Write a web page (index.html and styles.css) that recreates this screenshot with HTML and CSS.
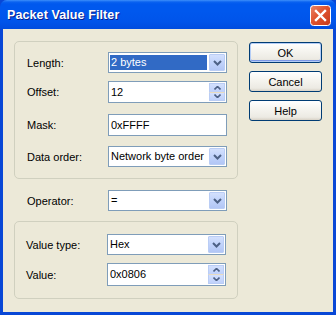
FILE: index.html
```html
<!DOCTYPE html>
<html>
<head>
<meta charset="utf-8">
<link rel="stylesheet" href="styles.css">
</head>
<body>
<div class="window">
  <div class="titlebar">
    <span class="title">Packet Value Filter</span>
    <span class="close">
      <svg width="21" height="21" viewBox="0 0 21 21">
        <defs>
          <linearGradient id="cg" x1="0" y1="0" x2="1" y2="1">
            <stop offset="0" stop-color="#e8866a"/>
            <stop offset="0.45" stop-color="#e0542f"/>
            <stop offset="1" stop-color="#c6391a"/>
          </linearGradient>
        </defs>
        <rect x="0.5" y="0.5" width="20" height="20" rx="3" fill="url(#cg)" stroke="#ffffff"/>
        <path d="M6 6 L15 15 M15 6 L6 15" stroke="#ffffff" stroke-width="2.4" stroke-linecap="square"/>
      </svg>
    </span>
  </div>
  <div class="client">
    <div class="main">
      <div class="group g1">
        <div class="row r1">
          <span class="label">Length:</span>
          <div class="field combo h21">
            <span class="value selected">2 bytes</span>
            <span class="dropbtn"><svg width="9" height="6" viewBox="0 0 9 6"><path d="M1 1 L4.5 4.5 L8 1" fill="none" stroke="#4d6185" stroke-width="2"/></svg></span>
          </div>
        </div>
        <div class="row r2">
          <span class="label">Offset:</span>
          <div class="field spin h22">
            <span class="value">12</span>
            <span class="spinbtns">
              <span class="sb up"><svg width="7" height="4" viewBox="0 0 7 4"><path d="M0.5 3.5 L3.5 0.5 L6.5 3.5" fill="none" stroke="#4d6185" stroke-width="1.6"/></svg></span>
              <span class="sb down"><svg width="7" height="4" viewBox="0 0 7 4"><path d="M0.5 0.5 L3.5 3.5 L6.5 0.5" fill="none" stroke="#4d6185" stroke-width="1.6"/></svg></span>
            </span>
          </div>
        </div>
        <div class="row r3">
          <span class="label">Mask:</span>
          <div class="field edit h22">
            <span class="value">0xFFFF</span>
          </div>
        </div>
        <div class="row r4">
          <span class="label">Data order:</span>
          <div class="field combo h21">
            <span class="value">Network byte order</span>
            <span class="dropbtn"><svg width="9" height="6" viewBox="0 0 9 6"><path d="M1 1 L4.5 4.5 L8 1" fill="none" stroke="#4d6185" stroke-width="2"/></svg></span>
          </div>
        </div>
      </div>

      <div class="row operator">
        <span class="label">Operator:</span>
        <div class="field combo h21">
          <span class="value">=</span>
          <span class="dropbtn"><svg width="9" height="6" viewBox="0 0 9 6"><path d="M1 1 L4.5 4.5 L8 1" fill="none" stroke="#4d6185" stroke-width="2"/></svg></span>
        </div>
      </div>

      <div class="group g2">
        <div class="row r1">
          <span class="label">Value type:</span>
          <div class="field combo h21">
            <span class="value">Hex</span>
            <span class="dropbtn"><svg width="9" height="6" viewBox="0 0 9 6"><path d="M1 1 L4.5 4.5 L8 1" fill="none" stroke="#4d6185" stroke-width="2"/></svg></span>
          </div>
        </div>
        <div class="row r2">
          <span class="label">Value:</span>
          <div class="field spin h23">
            <span class="value">0x0806</span>
            <span class="spinbtns">
              <span class="sb up"><svg width="7" height="4" viewBox="0 0 7 4"><path d="M0.5 3.5 L3.5 0.5 L6.5 3.5" fill="none" stroke="#4d6185" stroke-width="1.6"/></svg></span>
              <span class="sb down"><svg width="7" height="4" viewBox="0 0 7 4"><path d="M0.5 0.5 L3.5 3.5 L6.5 0.5" fill="none" stroke="#4d6185" stroke-width="1.6"/></svg></span>
            </span>
          </div>
        </div>
      </div>
    </div>

    <div class="buttons">
      <button class="btn default">OK</button>
      <button class="btn">Cancel</button>
      <button class="btn">Help</button>
    </div>
  </div>
</div>
</body>
</html>
```

FILE: styles.css
```css
* { box-sizing: border-box; }
html, body { margin: 0; padding: 0; }
body {
  width: 336px;
  height: 315px;
  overflow: hidden;
  font-family: "Liberation Sans", Arial, sans-serif;
  font-size: 11px;
  color: #000;
}
.window {
  width: 336px;
  height: 315px;
  display: flex;
  flex-direction: column;
  background: #0847d6;
}
.titlebar {
  height: 29px;
  flex: none;
  display: flex;
  align-items: center;
  justify-content: space-between;
  padding: 0 5px 0 7px;
  background: linear-gradient(#3d8ffa 0, #0a62f0 2px, #0058ee 4px, #0058ee 40%, #0054ea 75%, #004cde 100%);
  border-radius: 7px 7px 0 0;
}
.title {
  color: #fff;
  font-weight: bold;
  font-size: 12.5px;
  text-shadow: 1px 1px 0 #0a1e8c;
  letter-spacing: 0.1px;
  margin-top: 1px;
}
.close {
  width: 21px;
  height: 21px;
  display: flex;
  margin-top: 1px;
}
.client {
  flex: 1;
  margin: 0 3px 3px 3px;
  background: #ece9d8;
  display: flex;
  padding: 12px 0 0 11px;
}
.main {
  width: 224px;
  display: flex;
  flex-direction: column;
}
.group {
  border: 1px solid #d0d0bf;
  border-radius: 5px;
  display: flex;
  flex-direction: column;
}
.g1 {
  height: 138px;
  padding: 10px 0 0 12px;
}
.g1 .r2 { margin-top: 8px; }
.g1 .r3 { margin-top: 11px; }
.g1 .r4 { margin-top: 10px; }
.operator {
  margin-top: 11px;
  padding-left: 13px;
}
.g2 {
  margin-top: 10px;
  height: 78px;
  padding: 12px 0 0 11px;
}
.g2 .r2 { margin-top: 8px; }

.row {
  display: flex;
  align-items: center;
}
.label {
  width: 81px;
  flex: none;
}
.field {
  width: 119px;
  border: 1px solid #7f9db9;
  background: #fff;
  display: flex;
  align-items: center;
  padding: 1px;
}
.h21 { height: 21px; }
.h22 { height: 22px; }
.h23 { height: 23px; }
.value {
  flex: 1;
  padding-left: 1px;
  white-space: nowrap;
  overflow: hidden;
  line-height: 15px;
}
.selected {
  background: #316ac5;
  color: #fff;
  margin-right: 2px;
  align-self: stretch;
  display: flex;
  align-items: center;
  margin-top: 1px;
  margin-bottom: 1px;
}
.dropbtn {
  width: 16px;
  flex: none;
  align-self: stretch;
  border: 1px solid #bacdf5;
  border-radius: 1px;
  background: linear-gradient(#d3e0fd, #c1d3fb 50%, #b2c6f5);
  display: flex;
  align-items: center;
  justify-content: center;
}
.spinbtns {
  width: 16px;
  flex: none;
  align-self: stretch;
  display: flex;
  flex-direction: column;
}
.sb {
  flex: 1;
  display: flex;
  align-items: center;
  justify-content: center;
  background: linear-gradient(#d3e0fd, #bfd1fb);
  border: 1px solid #bacdf5;
}
.sb.up { border-bottom: 1px solid #e9dcc0; }
.sb.down { border-top: none; }

.buttons {
  margin-left: 11px;
  margin-top: 1px;
  width: 73px;
  display: flex;
  flex-direction: column;
  gap: 8px;
}
.btn {
  height: 21px;
  width: 73px;
  padding: 0;
  font-family: "Liberation Sans", Arial, sans-serif;
  font-size: 11px;
  color: #000;
  border: 1px solid #003c74;
  border-radius: 3px;
  background: linear-gradient(#ffffff 0, #f6f5f0 40%, #eceae3 85%, #d8d2c6 100%);
}
.btn.default {
  box-shadow: inset 0 0 0 1px #b4cdf6, inset 0 -1px 0 1px #7c98e6;
}
```
